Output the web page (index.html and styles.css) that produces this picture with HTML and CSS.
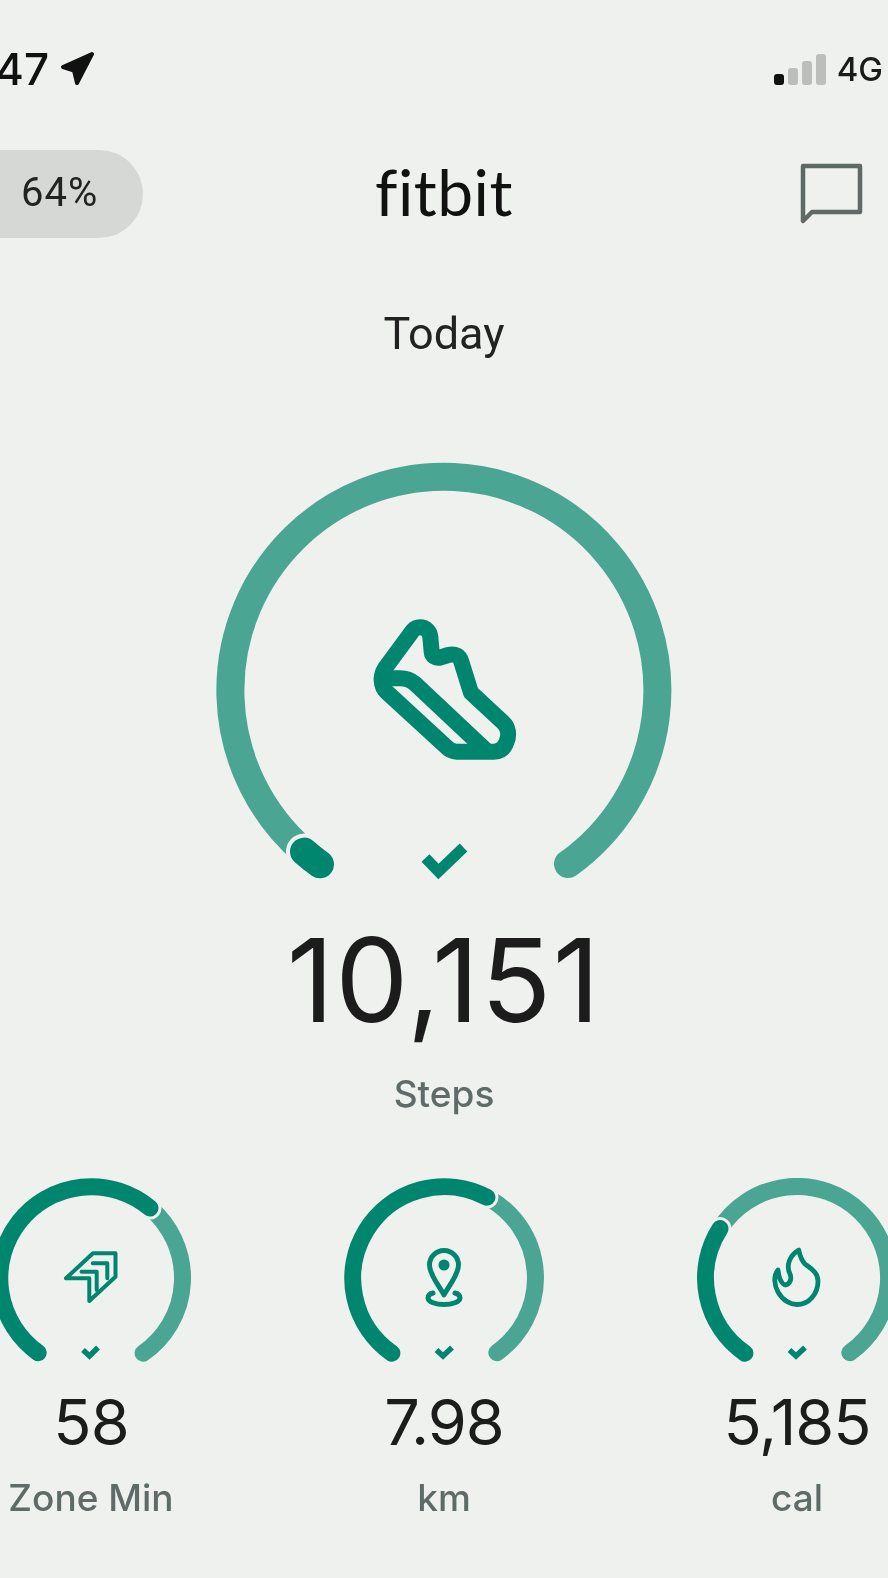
FILE: index.html
```
<!DOCTYPE html>
<html>
<head>
<meta charset="utf-8" />
<title>fitbit</title>
<link rel="stylesheet" href="styles.css">
</head>
<body>
	<div class="status">
		<div class="status-left">
			<span class="time">47</span>
			<svg class="arrow" width="36" height="36" viewBox="60 52 36 36"><path d="M93 55 64 68 75 71.500 78 84Z"/></svg>
		</div>
		<div class="status-right">
			<div class="signal">
				<span class="bar bar1"></span>
				<span class="bar bar2"></span>
				<span class="bar bar3"></span>
				<span class="bar bar4"></span>
			</div>
			<span class="net">4G</span>
		</div>
	</div>

	<div class="header">
		<div class="pill">64%</div>
		<div class="logo">fitbit</div>
		<svg class="chat" width="64" height="62" viewBox="800 163 64 62"><path d="M803 221V166H860V212H812Z"/></svg>
	</div>

	<div class="today">Today</div>

	<svg class="gauge" width="456" height="420" viewBox="216 462 456 420">
		<path class="light" stroke-width="28" d="M304 851.600A213.500 213.500 0 1 1 568 864"/>
		<path class="halo" stroke-width="36" d="M304 851.600A213.500 213.500 0 0 0 320 864.300"/>
		<path class="dark" stroke-width="28" d="M304 851.600A213.500 213.500 0 0 0 320 864.300"/>
		<g class="icon" transform="translate(340 590) scale(.3333)">
			<path stroke-width="48" d="M240 112C258 112 270 125 271 142L275 185C276 200 290 206 302 202L325 195C345 190 358 197 364 215L393 308L490 398C505 412 508 435 500 455C493 475 480 485 462 485H350C335 485 325 478 315 467L140 306C122 290 120 258 135 235L218 122C224 115 232 112 240 112Z"/>
			<path stroke-width="48" d="M125 265H180C200 265 212 270 225 281L435 478"/>
		</g>
		<path class="tick" stroke-width="11" d="M425.500 858 438.500 871.500 463.500 847.500"/>
	</svg>

	<div class="value">10,151</div>
	<div class="label">Steps</div>

	<div class="row">
		<div class="stat">
			<svg class="ring" width="200" height="190" viewBox="-100 -100 200 190">
				<path class="light" stroke-width="17" d="M59 -70A91.500 91.500 0 0 1 52.100 75.200"/>
				<path class="halo" stroke-width="23" d="M-52.800 74.700A91.500 91.500 0 1 1 59 -70"/>
				<path class="dark" stroke-width="17" d="M-52.800 74.700A91.500 91.500 0 1 1 59 -70"/>
				<g class="icon" stroke-width="4">
					<path d="M24.500 -24.800H2L-25 .3H-1.700V23L24.500 -1.300Z"/>
					<path d="M-9.500 -6.300H5.700V12"/>
					<path d="M1.700 -14.700H16.300V.3"/>
				</g>
				<path class="tick" stroke-width="5.500" d="M-8 72-1.500 78 7 69.500"/>
			</svg>
			<div class="stat-value">58</div>
			<div class="label stat-label">Zone Min</div>
		</div>
		<div class="stat">
			<svg class="ring" width="200" height="190" viewBox="-100 -100 200 190">
				<path class="light" stroke-width="17" d="M42.900 -80.800A91.500 91.500 0 0 1 52.800 74.700"/>
				<path class="halo" stroke-width="23" d="M-52.100 75.200A91.500 91.500 0 0 1 42.900 -80.800"/>
				<path class="dark" stroke-width="17" d="M-52.100 75.200A91.500 91.500 0 0 1 42.900 -80.800"/>
				<g class="icon" stroke-width="5">
					<path d="M0 17C-4 9-14.500 -3-14.500 -13A14.500 14.500 0 1 1 14.500 -13C14.500 -3 4 9 0 17Z"/>
					<path d="M-11 15C-15 16-16 18-16 20C-16 24-8 26.500 0 26.500C8 26.500 16 24 16 20C16 18 15 16 11 15"/>
				</g>
				<circle class="pin-dot" cx="0" cy="-13" r="5.500"/>
				<path class="tick" stroke-width="5.500" d="M-7.500 72-1 78 8 69.500"/>
			</svg>
			<div class="stat-value">7.98</div>
			<div class="label stat-label">km</div>
		</div>
		<div class="stat">
			<svg class="ring" width="200" height="190" viewBox="-100 -100 200 190">
				<path class="light" stroke-width="17" d="M-77 -49.400A91.500 91.500 0 1 1 52.800 74.700"/>
				<path class="halo" stroke-width="23" d="M-52.100 75.200A91.500 91.500 0 0 1 -77 -49.400"/>
				<path class="dark" stroke-width="17" d="M-52.100 75.200A91.500 91.500 0 0 1 -77 -49.400"/>
				<g class="icon" stroke-width="4.800">
					<path d="M1.700 -28C-8 -22-11 -12-7 -4C-5 1-7 6-11.500 7C-16 6-18 0-19 -8C-24 -2-22.500 8-19 14C-14 23-6 26.500 0 26.500C12 26.500 21 16 21 3C21 -6 13 -10 8 -14C4 -18 3 -22 1.700 -28Z"/>
				</g>
				<path class="tick" stroke-width="5.500" d="M-7.500 72-1 78 8 69.500"/>
			</svg>
			<div class="stat-value">5,185</div>
			<div class="label stat-label">cal</div>
		</div>
	</div>
</body>
</html>
```

FILE: styles.css
```
*{margin:0;padding:0;box-sizing:border-box;}
html,body{height:1578px;overflow:hidden;}
html{background:#eff1ef;}
body{width:888px;color:#1c1c1c;font-family:"Inter","Liberation Sans",sans-serif;text-align:center;filter:blur(.6px);}

/* status bar */
.status{display:flex;justify-content:space-between;height:50px;margin-top:44px;}
.status-left{display:flex;align-items:center;margin-left:-5px;}
.time{font-size:44px;font-weight:500;line-height:50px;color:#111;}
.arrow{margin-left:10px;}
.arrow path{fill:#111;stroke:#111;stroke-width:4;stroke-linejoin:round;}
.status-right{display:flex;align-items:center;margin-right:5px;}
.signal{display:flex;align-items:flex-end;gap:4px;height:32px;}
.bar{width:10px;border-radius:3px;background:#bcbebc;}
.bar1{height:11px;background:#111;}
.bar2{height:17px;}
.bar3{height:24px;}
.bar4{height:31px;}
.net{margin-left:11px;font-size:33px;font-weight:500;line-height:50px;color:#1a1a1a;}

/* top bar */
.header{display:grid;grid-template-columns:1fr auto 1fr;align-items:center;height:88px;margin-top:56px;}
.pill{justify-self:start;width:143px;height:88px;padding-left:21px;background:#d6d8d6;border-radius:0 44px 44px 0;font-family:"Roboto",sans-serif;font-size:40px;line-height:86px;text-align:left;color:#222;letter-spacing:1px;}
.logo{font-family:"Lato",sans-serif;font-size:64px;line-height:84px;height:88px;color:#111;font-variant-ligatures:none;letter-spacing:.5px;}
.chat{justify-self:end;margin-right:24px;}
.chat path{fill:none;stroke:#5f6a66;stroke-width:4.500;stroke-linejoin:round;}

.today{margin-top:72px;font-family:"Roboto",sans-serif;font-size:45px;line-height:48px;color:#222;}

/* gauges */
.gauge{display:block;margin:104px auto 0;}
.gauge path,.ring path{fill:none;stroke-linecap:round;}
.light{stroke:#4aa592;}
.dark{stroke:#00856f;}
.halo{stroke:#eff1ef;}
.icon path{stroke:#00856f;stroke-linejoin:round;}
.gauge .tick,.ring .tick{stroke:#00856f;stroke-linecap:butt;}
.pin-dot{fill:#00856f;}

.value{margin-top:39px;font-size:116px;font-weight:400;line-height:119px;letter-spacing:1.500px;}
.label{margin-top:32px;font-size:37px;font-weight:500;line-height:44px;color:#5f6b68;}

/* bottom three */
.row{display:flex;justify-content:center;margin-top:62px;}
.stat{flex:0 0 353px;}
.ring{display:block;margin:0 auto;}
.stat-value{margin-top:22px;font-size:63px;line-height:64px;letter-spacing:-1px;}
.stat-label{margin-top:22px;}
```
